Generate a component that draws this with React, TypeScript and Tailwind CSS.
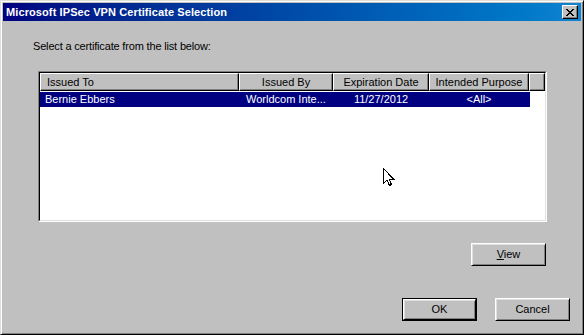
const raised = "border border-t-white border-l-white border-r-black border-b-black shadow-[inset_-1px_-1px_0_#808080]";

const columns = [
  { label: "Issued To", w: "w-[199px]", align: "justify-start pl-[6px]" },
  { label: "Issued By", w: "w-[94px]", align: "justify-center" },
  { label: "Expiration Date", w: "w-[96px]", align: "justify-center" },
  { label: "Intended Purpose", w: "w-[100px]", align: "justify-center" },
];

const Button = ({ children, isDefault }: { children: React.ReactNode; isDefault?: boolean }) => (
  <div className={"w-[75px] h-[23px] " + (isDefault ? "border border-black" : "")}>
    <div
      className={
        "h-full w-full flex items-center justify-center bg-[#c0c0c0] text-black border border-t-white border-l-white border-r-black border-b-black shadow-[inset_1px_1px_0_#dfdfdf,inset_-1px_-1px_0_#808080]"
      }
    >
      {children}
    </div>
  </div>
);

const App = () => {
  return (
    <div
      className="w-[584px] h-[335px] bg-[#c0c0c0] border border-t-[#dfdfdf] border-l-[#dfdfdf] border-r-black border-b-black p-[2px] shadow-[inset_1px_1px_0_white,inset_-1px_-1px_0_#808080] flex flex-col text-[11px] leading-[13px] text-black"
      style={{ fontFamily: '"Liberation Sans", Arial, sans-serif' }}
    >
      {/* title bar */}
      <div className="h-[18px] flex items-center justify-between bg-gradient-to-r from-[#000080] to-[#1084d0] pl-[3px] pr-[3px]">
        <span className="text-white font-bold text-[11px] leading-[14px] tracking-[0.1px]">Microsoft IPSec VPN Certificate Selection</span>
        <div className="w-[16px] h-[14px] bg-[#c0c0c0] border border-t-white border-l-white border-r-black border-b-black shadow-[inset_-1px_-1px_0_#808080] flex items-center justify-center">
          <svg width="8" height="7" viewBox="0 0 8 7" shapeRendering="crispEdges">
            <path d="M0 0h2v1H0zM6 0h2v1H6zM1 1h2v1H1zM5 1h2v1H5zM2 2h4v1H2zM3 3h2v1H3zM2 4h4v1H2zM1 5h2v1H1zM5 5h2v1H5zM0 6h2v1H0zM6 6h2v1H6z" fill="black" />
          </svg>
        </div>
      </div>

      <div className="mt-[19px] pl-[30px] tracking-[-0.17px]">Select a certificate from the list below:</div>

      {/* certificate list */}
      <div className="relative mt-[18px] ml-[35px] w-[509px] h-[151px] border border-t-[#808080] border-l-[#808080] border-r-white border-b-white">
        <div className="h-full w-full bg-white border border-t-black border-l-black border-r-[#dfdfdf] border-b-[#dfdfdf] flex flex-col">
          <div className="flex h-[18px] shrink-0">
            {columns.map((c) => (
              <div key={c.label} className={`${c.w} h-full flex items-center bg-[#c0c0c0] ${raised} ${c.align}`}>
                {c.label}
              </div>
            ))}
            <div className={`flex-1 h-full bg-[#c0c0c0] ${raised}`} />
          </div>
          <div className="mt-px flex h-[15px] w-[490px] items-center bg-[#000080] text-white">
            <div className="w-[199px] pl-[5px]">Bernie Ebbers</div>
            <div className="w-[94px] pl-[7px] whitespace-nowrap">Worldcom Inte...</div>
            <div className="w-[96px] text-center">11/27/2012</div>
            <div className="w-[100px] text-center">&lt;All&gt;</div>
          </div>
        </div>
        {/* mouse pointer */}
        <svg className="absolute left-[344px] top-[96px]" width="12" height="19" viewBox="0 0 12 19" shapeRendering="crispEdges">
          <path d="M0.5 0.5 V15.5 L4 12 L6.5 17.5 L8.5 16.5 L6 11 H10.5 Z" fill="white" stroke="black" strokeWidth="1" />
        </svg>
      </div>

      <div className="mt-[21px] flex justify-end pr-[35px]">
        <Button>
          <span>
            <span className="underline">V</span>iew
          </span>
        </Button>
      </div>

      <div className="mt-[32px] flex justify-end gap-[18px] pr-[11px]">
        <Button isDefault>OK</Button>
        <Button>Cancel</Button>
      </div>
    </div>
  );
};

export default App;
